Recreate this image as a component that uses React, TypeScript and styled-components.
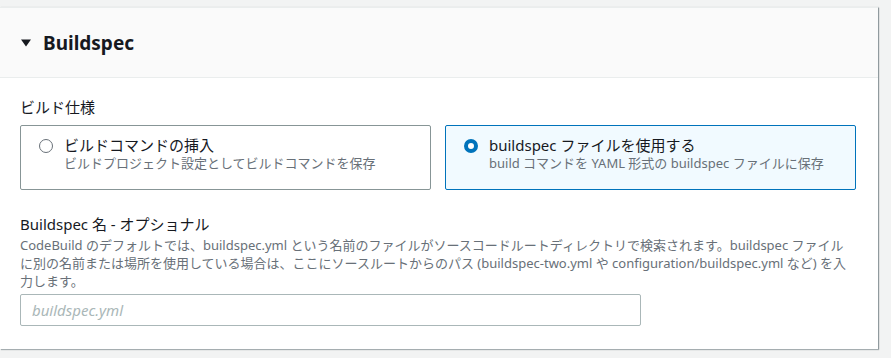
import styled, { createGlobalStyle } from 'styled-components'

const GlobalStyle = createGlobalStyle`
  html, body {
    margin: 0;
    padding: 0;
    background: #f2f3f3;
  }
  body {
    font-family: "Noto Sans", "Noto Sans CJK JP", sans-serif;
    color: #16191f;
  }
`

const App = () => {
  return (
    <Page>
      <GlobalStyle />
      <Panel>
        <Header>
          <Caret viewBox="0 0 12 12">
            <path d="M1 2.5h10L6 9.5z" fill="#16191f" />
          </Caret>
          <Title>Buildspec</Title>
        </Header>
        <Body>
          <FieldLabel>ビルド仕様</FieldLabel>
          <Tiles>
            <Tile>
              <Radio />
              <TileText>
                <TileTitle>ビルドコマンドの挿入</TileTitle>
                <TileDesc>ビルドプロジェクト設定としてビルドコマンドを保存</TileDesc>
              </TileText>
            </Tile>
            <Tile $selected>
              <Radio $checked />
              <TileText>
                <TileTitle>buildspec ファイルを使用する</TileTitle>
                <TileDesc>build コマンドを YAML 形式の buildspec ファイルに保存</TileDesc>
              </TileText>
            </Tile>
          </Tiles>
          <Field>
            <FieldLabel>Buildspec 名 - オプショナル</FieldLabel>
            <Hint>
              CodeBuild のデフォルトでは、buildspec.yml という名前のファイルがソースコードルートディレクトリで検索されます。buildspec ファイルに別の名前または場所を使用している場合は、ここにソースルートからのパス (buildspec-two.yml や configuration/buildspec.yml など) を入力します。
            </Hint>
            <Input placeholder="buildspec.yml" />
          </Field>
        </Body>
      </Panel>
    </Page>
  )
}

const Page = styled.div`
  padding-top: 7px;
  height: 358px;
  box-sizing: border-box;
  overflow: hidden;
`

const Panel = styled.div`
  width: 878px;
  background: #ffffff;
  border-top: 1px solid #eaeded;
  box-shadow: 1px 1px 1px 0 rgba(0, 28, 36, 0.3), 1px 0 1px 0 rgba(0, 28, 36, 0.15);
`

const Header = styled.div`
  display: flex;
  align-items: center;
  gap: 11px;
  height: 69px;
  padding: 0 20px;
  background: #fafafa;
  border-bottom: 1px solid #eaeded;
`

const Caret = styled.svg`
  width: 12px;
  height: 12px;
`

const Title = styled.h2`
  margin: 0;
  font-size: 19px;
  font-weight: 700;
  line-height: 22px;
  color: #16191f;
`

const Body = styled.div`
  padding: 18px 20px 23px;
`

const FieldLabel = styled.div`
  font-size: 15px;
  line-height: 22px;
  color: #16191f;
`

const Tiles = styled.div`
  display: grid;
  grid-template-columns: 411px 411px;
  gap: 14px;
  margin-top: 7px;
`

const Tile = styled.div<{ $selected?: boolean }>`
  display: flex;
  align-items: flex-start;
  gap: 11px;
  height: 65px;
  box-sizing: border-box;
  padding: 10px 18px;
  border: 1px solid ${(p) => (p.$selected ? '#0073bb' : '#879596')};
  background: ${(p) => (p.$selected ? '#f1faff' : '#ffffff')};
  border-radius: 2px;
`

const Radio = styled.span<{ $checked?: boolean }>`
  flex: none;
  width: 14px;
  height: 14px;
  margin-top: 3px;
  box-sizing: border-box;
  border-radius: 50%;
  border: ${(p) => (p.$checked ? '4px solid #0073bb' : '1px solid #687078')};
  background: #ffffff;
`

const TileText = styled.div`
  display: flex;
  flex-direction: column;
`

const TileTitle = styled.span`
  font-size: 15px;
  line-height: 19px;
  color: #16191f;
`

const TileDesc = styled.span`
  font-size: 13px;
  line-height: 17px;
  color: #687078;
`

const Field = styled.div`
  margin-top: 23px;
`

const Hint = styled.div`
  width: 836px;
  font-size: 13px;
  line-height: 18px;
  color: #687078;
  margin-top: 1px;
`

const Input = styled.input`
  display: block;
  width: 621px;
  height: 32px;
  box-sizing: border-box;
  margin-top: 4px;
  padding: 4px 11px;
  font-family: "Noto Sans", "Noto Sans CJK JP", sans-serif;
  font-size: 15px;
  color: #16191f;
  border: 1px solid #aab7b8;
  border-radius: 2px;
  background: #ffffff;
  outline: none;

  &::placeholder {
    color: #aab7b8;
    font-style: italic;
  }
`

export default App
